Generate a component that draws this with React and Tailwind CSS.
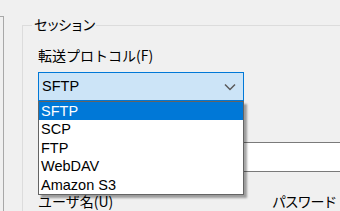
import React from "react";

const jp = "font-['Noto_Sans_CJK_JP',sans-serif]";
const lat = "font-['Liberation_Sans','Noto_Sans_CJK_JP',sans-serif]";

function Chevron() {
  return (
    <svg width="12" height="8" viewBox="0 0 12 8" className="block">
      <path d="M1 1.5 L6 6.5 L11 1.5" fill="none" stroke="#5a5a5a" strokeWidth="1.5" />
    </svg>
  );
}

export default function App() {
  const items = ["SFTP", "SCP", "FTP", "WebDAV", "Amazon S3"];
  return (
    <div className="w-[340px] h-[211px] bg-[#f0f0f0] overflow-hidden flex text-[#000]">
      <div className="w-[4px] shrink-0 mt-[16px] border-t border-r border-[#a8a8a8]" />
      <div className="relative ml-[18px] mt-[25px] w-[400px] shrink-0 border-t border-l border-[#dcdcdc] pl-[15px]">
        <div className={`absolute left-[9px] top-[-12px] px-[2px] bg-[#f0f0f0] text-[14px] leading-[20px] tracking-[-2px] ${jp}`}>
          セッション
        </div>
        <div className={`mt-[19px] text-[14px] leading-[20px] ${jp}`}>転送プロトコル(F)</div>
        <div className="relative mt-[7px] w-[206px]">
          <div className={`h-[29px] border border-[#0078d7] bg-[#cce4f7] flex items-center justify-between pl-[3px] pr-[7px] text-[14.5px] ${lat}`}>
            <span>SFTP</span>
            <Chevron />
          </div>
          <div className={`absolute left-0 top-[29px] z-10 w-[206px] bg-white border border-[#646464] shadow-[3px_3px_2px_rgba(0,0,0,0.35)] text-[14.5px] ${lat}`}>
            {items.map((t, i) => (
              <div
                key={t}
                className={`h-[18.4px] leading-[18.4px] pl-[2px] ${i === 0 ? "bg-[#0078d7] text-white" : ""}`}
              >
                {t}
              </div>
            ))}
          </div>
        </div>
        <div className="mt-[17px] h-[20px]" />
        <div className="mt-[4px] h-[30px] w-[320px] bg-white border border-[#7a7a7a]" />
        <div className={`mt-[19px] flex text-[14px] leading-[20px] ${jp}`}>
          <span className="w-[234px]">ユーザ名(U)</span>
          <span className="tracking-[-1.2px]">パスワード</span>
        </div>
      </div>
    </div>
  );
}
